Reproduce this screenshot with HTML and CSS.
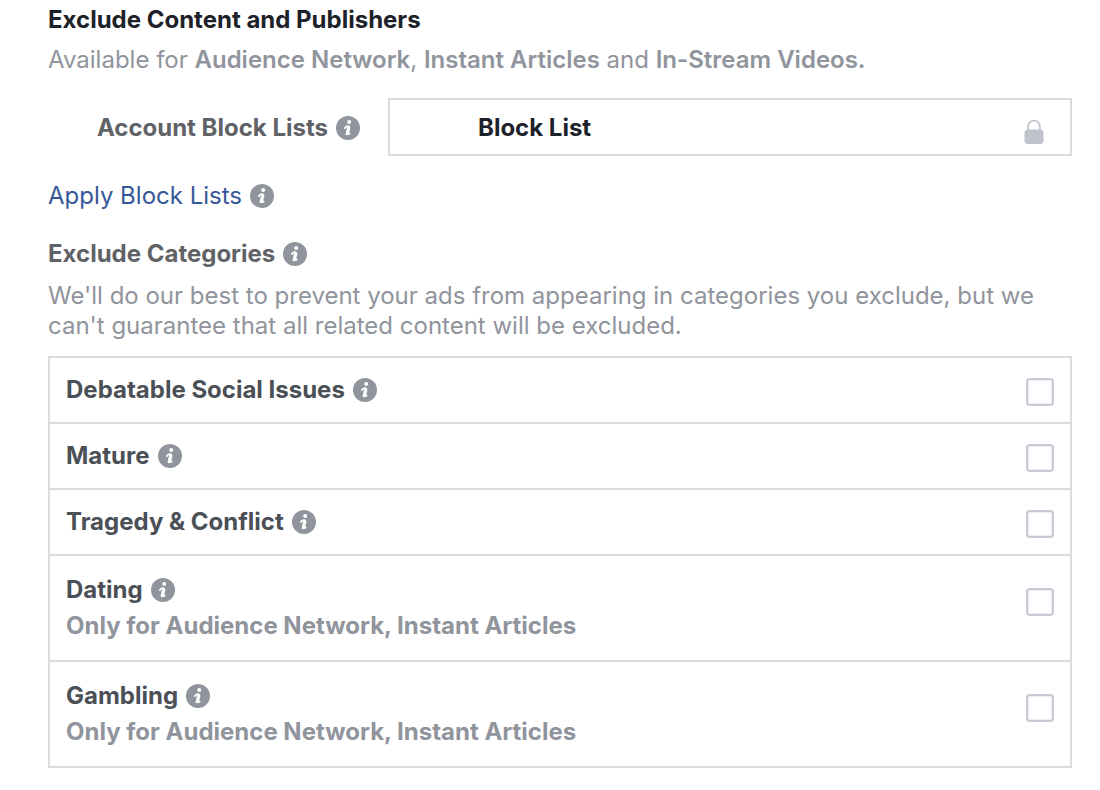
FILE: index.html
```html
<!DOCTYPE html>
<html lang="en">
<head>
  <meta charset="UTF-8">
  <meta name="viewport" content="width=device-width, initial-scale=1.0">
  <title>Exclude Content and Publishers</title>
  <link rel="stylesheet" href="styles.css">
</head>
<body>
  <svg class="sprite" aria-hidden="true">
    <symbol id="icon-info" viewBox="0 0 24 24">
      <circle cx="12" cy="12" r="12" fill="#90949c"/>
      <circle cx="13.2" cy="6" r="2" fill="#fff"/>
      <path d="M8.8 12.2c.6-1.4 2-2.2 3.3-2 1.3.2 1.6 1.2 1.3 2.5l-1.3 4.6c-.2.9.6 1 1.6.2" fill="none" stroke="#fff" stroke-width="1.7" stroke-linecap="round" stroke-linejoin="round"/>
      <path d="M12.4 11.4l-1.5 6.6" stroke="#fff" stroke-width="2.6" stroke-linecap="round"/>
    </symbol>
  </svg>

  <div class="exclusions">
    <h2>Exclude Content and Publishers</h2>
    <p class="available">Available for <b>Audience Network</b>, <b>Instant Articles</b> and <b>In-Stream Videos.</b></p>

    <div class="account">
      <div class="account-label">
        <label for="block-list">Account Block Lists</label>
        <button class="info" type="button" aria-label="About account block lists"><svg><use href="#icon-info"/></svg></button>
      </div>
      <div class="block-list">
        <input type="text" id="block-list" value="Block List" readonly>
        <svg class="lock" viewBox="0 0 20 24" aria-hidden="true">
          <path d="M4.2 11V6.5a5.8 5.8 0 0 1 11.6 0V11" fill="none" stroke="#bec3cc" stroke-width="1.8"/>
          <rect x="0.5" y="9.5" width="19" height="14.5" rx="3.5" fill="#bec3cc"/>
        </svg>
      </div>
    </div>

    <div class="apply">
      <a href="#">Apply Block Lists</a>
      <button class="info" type="button" aria-label="About applying block lists"><svg><use href="#icon-info"/></svg></button>
    </div>

    <div class="categories-title">
      <h3>Exclude Categories</h3>
      <button class="info" type="button" aria-label="About excluding categories"><svg><use href="#icon-info"/></svg></button>
    </div>
    <p class="note">We'll do our best to prevent your ads from appearing in categories you exclude, but we can't guarantee that all related content will be excluded.</p>

    <ul class="categories">
      <li>
        <div class="name">
          <label for="debatable">Debatable Social Issues</label>
          <button class="info" type="button" aria-label="About debatable social issues"><svg><use href="#icon-info"/></svg></button>
        </div>
        <input type="checkbox" id="debatable">
      </li>
      <li>
        <div class="name">
          <label for="mature">Mature</label>
          <button class="info" type="button" aria-label="About mature"><svg><use href="#icon-info"/></svg></button>
        </div>
        <input type="checkbox" id="mature">
      </li>
      <li>
        <div class="name">
          <label for="tragedy">Tragedy &amp; Conflict</label>
          <button class="info" type="button" aria-label="About tragedy and conflict"><svg><use href="#icon-info"/></svg></button>
        </div>
        <input type="checkbox" id="tragedy">
      </li>
      <li class="limited">
        <div>
          <div class="name">
            <label for="dating">Dating</label>
            <button class="info" type="button" aria-label="About dating"><svg><use href="#icon-info"/></svg></button>
          </div>
          <p class="only">Only for Audience Network, Instant Articles</p>
        </div>
        <input type="checkbox" id="dating">
      </li>
      <li class="limited">
        <div>
          <div class="name">
            <label for="gambling">Gambling</label>
            <button class="info" type="button" aria-label="About gambling"><svg><use href="#icon-info"/></svg></button>
          </div>
          <p class="only">Only for Audience Network, Instant Articles</p>
        </div>
        <input type="checkbox" id="gambling">
      </li>
    </ul>
  </div>
</body>
</html>
```
FILE: styles.css
```css
* {
  box-sizing: border-box;
}
body {
  margin: 0;
  background-color: #fff;
  color: #90949c;
  font-family: Inter, "Liberation Sans", sans-serif;
  font-size: 24px;
  line-height: 30px;
}
h2, h3, p, ul {
  margin: 0;
  padding: 0;
  font-size: 24px;
}
h2, h3 {
  font-weight: 650;
}
b {
  font-weight: 600;
}
h2 {
  color: #1d2129;
}
h3 {
  color: #606266;
}
.sprite {
  display: none;
}
.exclusions {
  padding: 5px 28px 22px 48px;
}
.available {
  margin-top: 10px;
}
.info {
  width: 24px;
  height: 24px;
  padding: 0;
  border: none;
  background: none;
  cursor: pointer;
}
.info svg {
  display: block;
  width: 24px;
  height: 24px;
}
.account-label, .apply, .categories-title, .name {
  display: flex;
  align-items: center;
  gap: 8px;
}
.account {
  display: flex;
  align-items: center;
  margin-top: 23px;
}
.account-label {
  flex: none;
  width: 340px;
  padding: 2px 28px 0 0;
  justify-content: flex-end;
  color: #606266;
  font-weight: 650;
}
.block-list {
  flex: 1;
  display: flex;
  align-items: center;
  height: 58px;
  padding: 10px 26px 0 88px;
  border: 2px solid #dadbdd;
}
.block-list input {
  flex: 1;
  min-width: 0;
  margin-bottom: 8px;
  padding: 0;
  border: none;
  outline: none;
  background: none;
  color: #1d2129;
  font: inherit;
  font-weight: 650;
}
.lock {
  width: 20px;
  height: 24px;
}
.apply {
  margin-top: 25px;
}
.apply a {
  color: #365899;
  text-decoration: none;
}
.categories-title {
  margin-top: 28px;
}
.note {
  margin-top: 12px;
}
.categories {
  margin-top: 15px;
  border: 2px solid #dadbdd;
  list-style: none;
}
.categories li {
  display: flex;
  align-items: flex-start;
  justify-content: space-between;
  padding: 17px 16px;
}
.categories li + li {
  border-top: 2px solid #dadbdd;
}
.categories .limited {
  padding: 19px 16px;
}
.name {
  color: #4b4f56;
  font-weight: 650;
}
.only {
  margin-top: 6px;
  font-weight: 650;
}
.categories input {
  appearance: none;
  flex: none;
  width: 28px;
  height: 28px;
  margin: 3px 0 -1px;
  border: 2px solid #c6cad4;
  border-radius: 4px;
  background-color: #fff;
  box-shadow: inset 0 0 1px 1px #eceef2;
}
.categories input:checked {
  background-color: #365899;
}
.categories .limited input {
  margin-top: 13px;
}
```
